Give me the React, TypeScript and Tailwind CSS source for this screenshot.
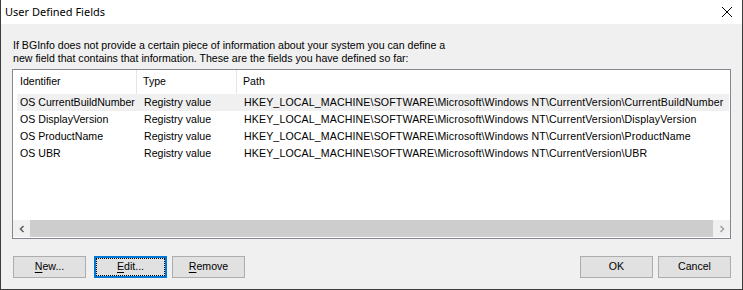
import React from 'react';

const rows = [
    { id: 'OS CurrentBuildNumber', type: 'Registry value', path: 'HKEY_LOCAL_MACHINE\\SOFTWARE\\Microsoft\\Windows NT\\CurrentVersion\\CurrentBuildNumber' },
    { id: 'OS DisplayVersion', type: 'Registry value', path: 'HKEY_LOCAL_MACHINE\\SOFTWARE\\Microsoft\\Windows NT\\CurrentVersion\\DisplayVersion' },
    { id: 'OS ProductName', type: 'Registry value', path: 'HKEY_LOCAL_MACHINE\\SOFTWARE\\Microsoft\\Windows NT\\CurrentVersion\\ProductName' },
    { id: 'OS UBR', type: 'Registry value', path: 'HKEY_LOCAL_MACHINE\\SOFTWARE\\Microsoft\\Windows NT\\CurrentVersion\\UBR' },
];

const Btn: React.FC<{ hot?: string; rest: string; focused?: boolean }> = ({ hot, rest, focused }) => (
    <button
        type="button"
        className={`w-[73px] h-[22px] bg-[#e1e1e1] flex items-center justify-center text-black ${focused ? 'border-2 border-[#0078d7] p-0' : 'border border-[#adadad]'}`}
    >
        <span className={`flex items-center justify-center w-full h-full ${focused ? 'border border-dotted border-black' : ''}`}>
            {hot && <span className="underline underline-offset-2">{hot}</span>}
            {rest}
        </span>
    </button>
);

const App: React.FC = () => {
    return (
        <div
            className="w-[743px] h-[290px] flex flex-col bg-[#f0f0f0] border-l border-r border-b border-[#3c3c3c] overflow-hidden text-[10.6px] text-black"
            style={{ fontFamily: '"Liberation Sans", Arial, sans-serif' }}
        >
            {/* title bar */}
            <div className="h-[24px] bg-white flex items-center justify-between pl-[4px] pr-[8px] shrink-0">
                <span className="text-[11px] text-black" style={{ fontFamily: '"Noto Sans", "Liberation Sans", sans-serif' }}>User Defined Fields</span>
                <svg width="12" height="12" viewBox="0 0 12 12" className="mr-[1px]">
                    <path d="M1 1 11 11M11 1 1 11" stroke="#000" strokeWidth="1" fill="none" />
                </svg>
            </div>

            <div className="flex-1 flex flex-col px-[11px]">
                <p className="mt-[15px] leading-[13px] pl-[1px]">
                    If BGInfo does not provide a certain piece of information about your system you can define a<br />
                    new field that contains that information. These are the fields you have defined so far:
                </p>

                {/* list view */}
                <div className="mt-[4px] h-[170px] border border-[#828790] bg-white flex flex-col">
                    <div className="h-[24px] flex items-stretch shrink-0">
                        <div className="w-[124px] pl-[7px] flex items-center border-r border-[#e5e5e5]">Identifier</div>
                        <div className="w-[100px] pl-[6px] flex items-center border-r border-[#e5e5e5]">Type</div>
                        <div className="flex-1 pl-[6px] flex items-center">Path</div>
                    </div>
                    <div className="flex-1 flex flex-col pl-[4px] pr-[1px]">
                        {rows.map((r, i) => (
                            <div key={r.id} className={`h-[17px] flex items-center whitespace-nowrap overflow-hidden ${i === 0 ? 'bg-[#f0f0f0]' : ''}`}>
                                <div className="w-[126px] shrink-0 pl-[3px] overflow-hidden">{r.id}</div>
                                <div className="w-[100px] shrink-0 pl-[1px] overflow-hidden">{r.type}</div>
                                <div className="flex-1 pl-[1px] overflow-hidden tracking-[0.13px]">{r.path}</div>
                            </div>
                        ))}
                    </div>
                    {/* horizontal scrollbar */}
                    <div className="h-[17px] flex items-stretch bg-[#f0f0f0] mb-[1px]">
                        <div className="w-[17px] flex items-center justify-center">
                            <svg width="8" height="8" viewBox="0 0 8 8">
                                <path d="M5.5 1 2.5 4l3 3" stroke="#606060" strokeWidth="1.6" fill="none" />
                            </svg>
                        </div>
                        <div className="flex-1 bg-[#cdcdcd]" />
                        <div className="w-[17px] flex items-center justify-center">
                            <svg width="8" height="8" viewBox="0 0 8 8">
                                <path d="M2.5 1 5.5 4l-3 3" stroke="#a3a3a3" strokeWidth="1.6" fill="none" />
                            </svg>
                        </div>
                    </div>
                </div>

                {/* buttons */}
                <div className="mt-[17px] flex items-center pl-[1px]">
                    <div className="flex items-center">
                        <Btn hot="N" rest="ew..." />
                        <div className="ml-[8px]">
                            <Btn hot="E" rest="dit..." focused />
                        </div>
                        <div className="ml-[5px]">
                            <Btn hot="R" rest="emove" />
                        </div>
                    </div>
                    <div className="ml-auto flex items-center gap-[5px]">
                        <Btn rest="OK" />
                        <Btn rest="Cancel" />
                    </div>
                </div>
            </div>
        </div>
    );
};

export default App;
